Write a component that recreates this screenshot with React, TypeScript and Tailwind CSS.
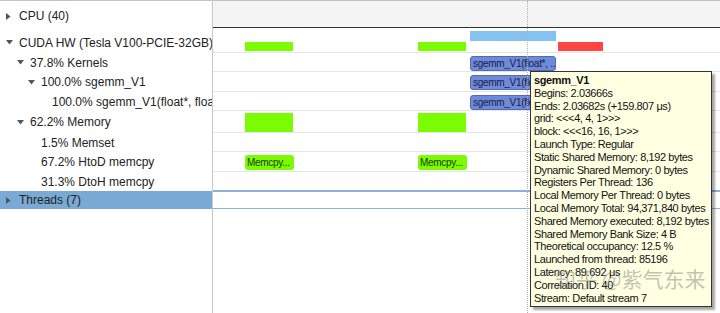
import type { ReactNode } from 'react'

type Row = {
  label: string
  indent: number
  arrow?: 'open' | 'closed'
  h: number
  selected?: boolean
  lane?: ReactNode
  textPad?: number
}

function Arrow({ kind }: { kind: 'open' | 'closed' }) {
  return kind === 'open' ? (
    <svg width="7" height="5" viewBox="0 0 7 5" className="shrink-0">
      <path d="M0 0 L7 0 L3.5 4.5 Z" fill="#555" />
    </svg>
  ) : (
    <svg width="5" height="7" viewBox="0 0 5 7" className="shrink-0">
      <path d="M0 0 L4.5 3.5 L0 7 Z" fill="#555" />
    </svg>
  )
}

function Bar({ left, top, width, height, className }: { left: number; top: number; width: number; height: number; className: string }) {
  return <div className={`absolute ${className}`} style={{ left, top, width, height }} />
}

function Pill({ left, top, width, text, green }: { left: number; top: number; width: number; text: string; green?: boolean }) {
  return (
    <div
      className={`absolute flex h-[15px] items-center overflow-hidden whitespace-nowrap rounded-[3px] px-[2px] text-[10px] leading-none tracking-[-0.3px] ${
        green ? 'bg-[#7cfc00] text-[#1b3a00]' : 'border border-[#5069bd] bg-[#6f8ad6] text-[#16204a]'
      }`}
      style={{ left, top, width }}
    >
      {text}
    </div>
  )
}

// lane coordinates are relative to the timeline column (starts at x=214)
const rows: Row[] = [
  {
    label: 'CUDA HW (Tesla V100-PCIE-32GB)',
    indent: 0,
    arrow: 'open',
    h: 25,
    textPad: 4,
    lane: (
      <>
        <Bar left={257} top={3} width={86} height={10} className="bg-[#86c2f0]" />
        <Bar left={32} top={14} width={48} height={9} className="bg-[#7cfc00]" />
        <Bar left={205} top={14} width={48} height={9} className="bg-[#7cfc00]" />
        <Bar left={345} top={14} width={45} height={9} className="bg-[#ff4444]" />
      </>
    ),
  },
  {
    label: '37.8% Kernels',
    indent: 1,
    arrow: 'open',
    h: 19,
    lane: <Pill left={257} top={3} width={86} text="sgemm_V1(float*, ..." />,
  },
  {
    label: '100.0% sgemm_V1',
    indent: 2,
    arrow: 'open',
    h: 20,
    lane: <Pill left={257} top={3} width={86} text="sgemm_V1(float*, ..." />,
  },
  {
    label: '100.0% sgemm_V1(float*, float*, float*, int, int, int)',
    indent: 3,
    h: 19,
    lane: <Pill left={257} top={3} width={86} text="sgemm_V1(float*, ..." />,
  },
  {
    label: '62.2% Memory',
    indent: 1,
    arrow: 'open',
    h: 22,
    lane: (
      <>
        <Bar left={32} top={2} width={48} height={19} className="bg-[#7cfc00]" />
        <Bar left={205} top={2} width={48} height={19} className="bg-[#7cfc00]" />
      </>
    ),
  },
  { label: '1.5% Memset', indent: 2, h: 19 },
  {
    label: '67.2% HtoD memcpy',
    indent: 2,
    h: 20,
    lane: (
      <>
        <Pill green left={32} top={3} width={49} text="Memcpy..." />
        <Pill green left={205} top={3} width={49} text="Memcpy..." />
      </>
    ),
  },
  { label: '31.3% DtoH memcpy', indent: 2, h: 19 },
  { label: 'Threads (7)', indent: 0, arrow: 'closed', h: 18, selected: true },
]

const tooltip = [
  'Begins: 2.03666s',
  'Ends: 2.03682s (+159.807 μs)',
  'grid:  <<<4, 4, 1>>>',
  'block: <<<16, 16, 1>>>',
  'Launch Type: Regular',
  'Static Shared Memory: 8,192 bytes',
  'Dynamic Shared Memory: 0 bytes',
  'Registers Per Thread: 136',
  'Local Memory Per Thread: 0 bytes',
  'Local Memory Total: 94,371,840 bytes',
  'Shared Memory executed: 8,192 bytes',
  'Shared Memory Bank Size: 4 B',
  'Theoretical occupancy: 12.5 %',
  'Launched from thread: 85196',
  'Latency: 89.692 μs',
  'Correlation ID: 40',
  'Stream: Default stream 7',
]

function TreeCell({ row }: { row: Row }) {
  const pad = 6 + row.indent * 11
  return (
    <div
      className={`flex w-[213px] shrink-0 items-center overflow-hidden whitespace-nowrap border-r border-[#c8c8c8] ${
        row.selected ? 'bg-[#79a9d5]' : 'bg-white'
      }`}
      style={{ height: row.h, paddingLeft: pad, paddingTop: row.textPad ?? 0 }}
    >
      <div className="flex w-[13px] shrink-0 items-center">{row.arrow && <Arrow kind={row.arrow} />}</div>
      <span className="text-[12px] text-[#222]">{row.label}</span>
    </div>
  )
}

export default function App() {
  return (
    <div
      className="relative h-[313px] w-[720px] overflow-hidden border-t border-[#c4c4c4] bg-white"
      style={{ fontFamily: '"Liberation Sans", "Noto Sans CJK SC", sans-serif' }}
    >
      {/* CPU header row */}
      <div className="flex h-[27px]">
        <div className="flex w-[213px] shrink-0 items-center border-r border-[#c8c8c8] pl-[6px] pt-[3px]">
          <div className="flex w-[13px] items-center">
            <Arrow kind="closed" />
          </div>
          <span className="text-[12px] text-[#222]">CPU (40)</span>
        </div>
        <div className="flex-1 border-b border-[#333] bg-[#f4f4f4]" />
      </div>

      {rows.map((row, i) => (
        <div key={i} className="flex">
          <TreeCell row={row} />
          <div
            className={`relative flex-1 border-b ${
              row.selected ? 'border-y border-[#8db0d3]' : i === rows.length - 2 ? 'border-[#8db0d3]' : 'border-[#e6e6e6]'
            }`}
            style={{ height: row.h }}
          >
            {row.lane}
          </div>
        </div>
      ))}

      {/* empty area */}
      <div className="flex h-[110px]">
        <div className="w-[213px] shrink-0 border-r border-[#c8c8c8]" />
        <div className="flex-1" />
      </div>

      {/* cursor line */}
      <div className="absolute left-[527px] top-0 h-full border-l border-dotted border-[#b0b0b0]" />

      {/* tooltip */}
      <div className="absolute left-[530px] top-[70px] w-[182px] overflow-hidden border border-[#333] bg-[#ffffe1] px-[3px] pb-[2px] pt-[2px] text-[11px] leading-[12.8px] tracking-[-0.4px] text-[#111] shadow-[3px_3px_2px_rgba(0,0,0,0.35)]">
        <div className="font-bold">sgemm_V1</div>
        {tooltip.map((line) => (
          <div key={line} className="whitespace-nowrap">
            {line}
          </div>
        ))}
      </div>

      {/* watermark */}
      <div
        className="absolute left-[555px] top-[267px] whitespace-nowrap text-[21px] leading-none text-[rgba(120,120,120,0.45)]"
        style={{ fontFamily: '"Noto Sans CJK SC", sans-serif' }}
      >
        知乎 @紫气东来
      </div>
    </div>
  )
}
